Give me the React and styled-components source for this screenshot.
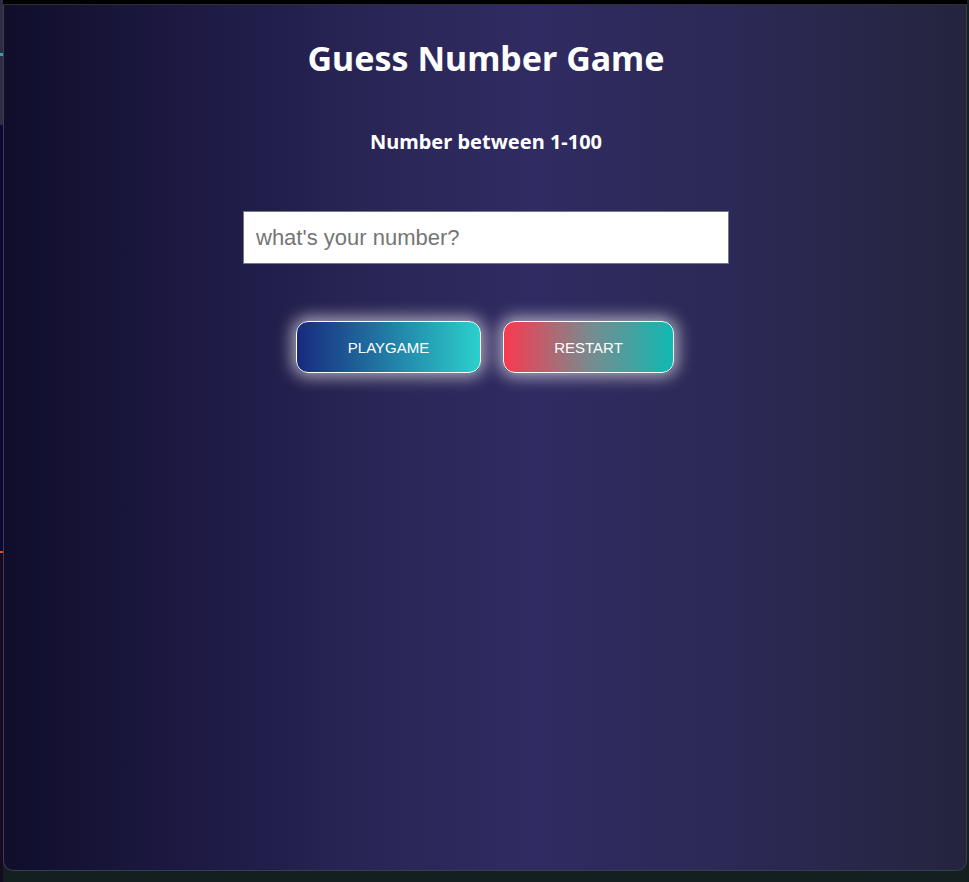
import React from "react";
import styled, { createGlobalStyle } from "styled-components";

const Global = createGlobalStyle`
  html, body { margin: 0; padding: 0; }
  body { background: #13201f; overflow: hidden; }
`;

const Page = styled.div`
  width: 969px;
  height: 882px;
  display: flex;
  background: #13201f;
`;

const LeftStrip = styled.div`
  width: 3px;
  flex: none;
  background: linear-gradient(
    to bottom,
    #2e2d45 0px, #2e2d45 53px, #2aa2a8 53px, #2aa2a8 56px,
    #2e2d45 56px, #2e2d45 125px, #0b0a32 125px, #0b0a32 551px,
    #e0501e 551px, #e0501e 553px, #150a22 553px, #150a22 100%
  );
`;

const Main = styled.div`
  flex: 1;
  display: flex;
  flex-direction: column;
`;

const TopBar = styled.div`
  height: 4px;
  background: #000;
  border-bottom: 1px solid #2c3030;
  margin-right: 2px;
`;

const Panel = styled.div`
  width: 964px;
  height: 866px;
  box-sizing: border-box;
  padding-left: 2px;
  border: 1px solid #3c3b52;
  border-top: none;
  border-radius: 0 0 10px 10px;
  background: linear-gradient(
    to right,
    #100e2b 0%,
    #1f1b47 22%,
    #2b2758 42%,
    #302b62 55%,
    #2b2954 78%,
    #25243e 100%
  );
  display: flex;
  flex-direction: column;
  align-items: center;
  font-family: "Segoe UI", "Noto Sans", "Open Sans", sans-serif;
  color: #fff;
`;

const Title = styled.h1`
  margin: 30px 0 0;
  font-size: 34px;
  font-weight: 700;
  line-height: 46px;
`;

const Subtitle = styled.h3`
  margin: 47px 0 0;
  font-size: 20px;
  font-weight: 700;
  line-height: 27px;
`;

const Input = styled.input`
  margin-top: 56px;
  width: 486px;
  height: 53px;
  box-sizing: border-box;
  border: 1px solid #76768a;
  background: #fff;
  padding: 0 12px;
  font-family: "Liberation Sans", Arial, sans-serif;
  font-size: 22px;
  color: #333;
  outline: none;
  &::placeholder { color: #757575; }
`;

const Buttons = styled.div`
  margin-top: 57px;
  display: flex;
  gap: 22px;
  padding-right: 2px;
`;

const Button = styled.button`
  width: ${(p) => p.$w}px;
  height: 52px;
  box-sizing: border-box;
  border: 1px solid #fff;
  border-radius: 12px;
  background: ${(p) => p.$bg};
  color: #fff;
  font-family: "Liberation Sans", Arial, sans-serif;
  font-size: 15px;
  box-shadow: 0 0 16px 4px rgba(255, 255, 255, 0.6);
  cursor: pointer;
`;

export default function App() {
  return (
    <>
      <Global />
      <Page>
        <LeftStrip />
        <Main>
          <TopBar />
          <Panel>
            <Title>Guess Number Game</Title>
            <Subtitle>Number between 1-100</Subtitle>
            <Input placeholder="what's your number?" />
            <Buttons>
              <Button $w={185} $bg="linear-gradient(to right, #182a7e, #2bd0cd)">PLAYGAME</Button>
              <Button $w={171} $bg="linear-gradient(to right, #f83a4f, #7a8a8e 50%, #10b9b2)">RESTART</Button>
            </Buttons>
          </Panel>
        </Main>
      </Page>
    </>
  );
}
